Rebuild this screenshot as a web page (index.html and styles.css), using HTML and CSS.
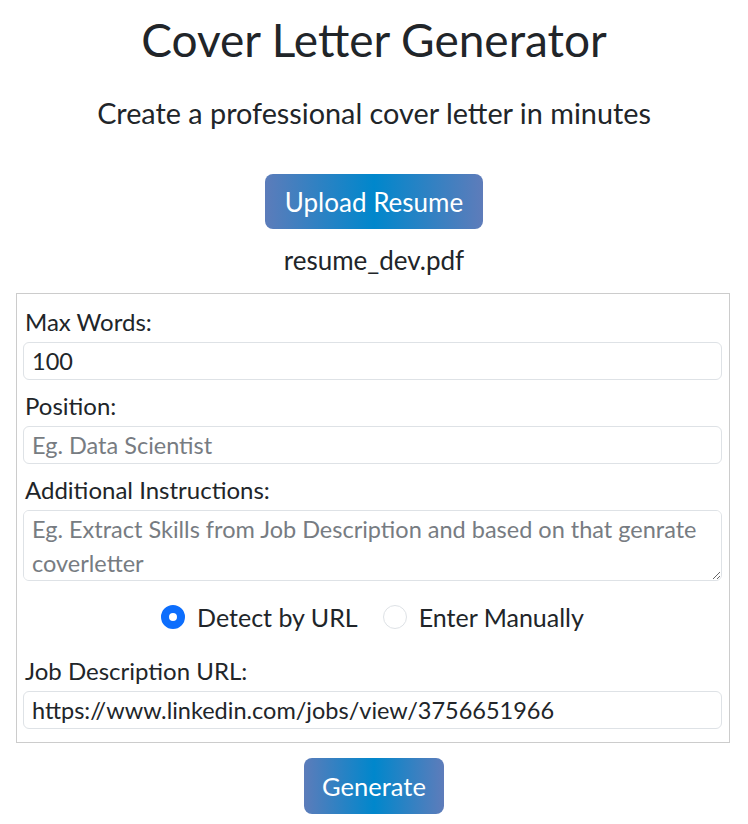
FILE: index.html
```html
<!DOCTYPE html>
<html>
<head>
<meta charset="utf-8">
<link rel="stylesheet" href="styles.css">
</head>
<body>
<div class="page">
  <h1 class="title">Cover Letter Generator</h1>
  <p class="subtitle">Create a professional cover letter in minutes</p>
  <button class="grad-btn upload">Upload Resume</button>
  <p class="filename">resume_dev.pdf</p>
  <form class="card">
    <label class="lbl">Max Words:</label>
    <input class="field" type="text" value="100">
    <label class="lbl">Position:</label>
    <input class="field" type="text" placeholder="Eg. Data Scientist">
    <label class="lbl">Additional Instructions:</label>
    <textarea class="field area" placeholder="Eg. Extract Skills from Job Description and based on that genrate coverletter"></textarea>
    <div class="radios">
      <label class="opt"><span class="radio on"></span>Detect by URL</label>
      <label class="opt"><span class="radio"></span>Enter Manually</label>
    </div>
    <label class="lbl">Job Description URL:</label>
    <input class="field last" type="text" value="https://www.linkedin.com/jobs/view/3756651966">
  </form>
  <button class="grad-btn generate">Generate</button>
</div>
</body>
</html>
```
FILE: styles.css
```css
* { box-sizing: border-box; }
body {
  margin: 0;
  font-family: "Lato", "Open Sans", sans-serif;
  color: #212529;
  background: #fff;
}
.page {
  display: flex;
  flex-direction: column;
  align-items: center;
  padding: 0 16px;
}
.title {
  margin: 15px 0 0;
  font-size: 46px;
  font-weight: 400;
  line-height: 50px;
  white-space: nowrap;
}
.subtitle {
  margin: 32px 0 0;
  font-size: 28.8px;
  line-height: 32px;
  white-space: nowrap;
}
.grad-btn {
  border: none;
  border-radius: 8px;
  color: #fff;
  font-family: inherit;
  background: linear-gradient(to right, #5c7cba 0%, #0087cc 50%, #5e7cba 100%);
}
.upload {
  margin-top: 45px;
  width: 218px;
  height: 55px;
  font-size: 26px;
}
.filename {
  margin: 15px 0 0;
  font-size: 26px;
  line-height: 32px;
}
.card {
  margin: 17px 2px 0 0;
  width: 714px;
  border: 1px solid #cccccc;
  padding: 14px 7px 1px 6px;
  display: flex;
  flex-direction: column;
}
.lbl {
  font-size: 24px;
  line-height: 28px;
  padding-left: 2px;
  margin-bottom: 6px;
  white-space: nowrap;
}
.field {
  height: 38px;
  border: 1px solid #dee2e6;
  border-radius: 6px;
  padding: 0 8px;
  font-family: inherit;
  font-size: 23.5px;
  color: #212529;
  margin-bottom: 12px;
}
.field::placeholder { color: #777c82; }
.area {
  height: 71px;
  padding: 1px 8px;
  line-height: 34px;
  resize: vertical;
}
.radios {
  display: flex;
  justify-content: center;
  gap: 25px;
  margin: 10px 0 26px;
  font-size: 25px;
  line-height: 28px;
  white-space: nowrap;
}
.opt {
  display: flex;
  align-items: center;
  gap: 12px;
}
.radio {
  width: 24px;
  height: 24px;
  border-radius: 50%;
  border: 1px solid #dee2e6;
  background: #fff;
}
.radio.on {
  border: 8px solid #0d6efd;
}
.generate {
  margin-top: 15px;
  width: 140px;
  height: 56px;
  font-size: 25.5px;
}
```
